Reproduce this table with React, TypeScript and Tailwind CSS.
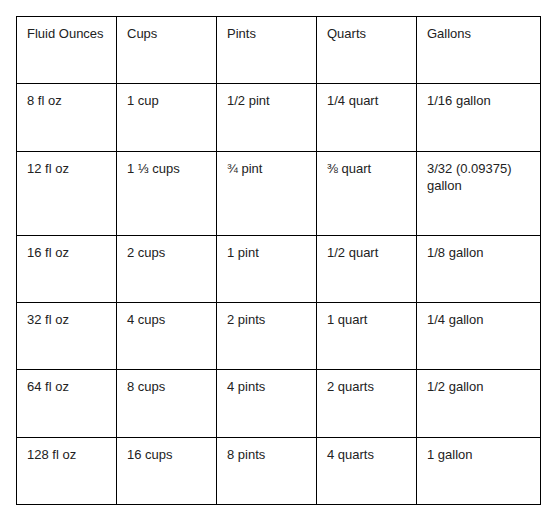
const rows: { cells: string[]; h: string }[] = [
  { cells: ['Fluid Ounces', 'Cups', 'Pints', 'Quarts', 'Gallons'], h: 'h-[67px]' },
  { cells: ['8 fl oz', '1 cup', '1/2 pint', '1/4 quart', '1/16 gallon'], h: 'h-[68px]' },
  { cells: ['12 fl oz', '1 ⅓ cups', '¾ pint', '⅜ quart', '3/32 (0.09375) gallon'], h: 'h-[84px]' },
  { cells: ['16 fl oz', '2 cups', '1 pint', '1/2 quart', '1/8 gallon'], h: 'h-[67px]' },
  { cells: ['32 fl oz', '4 cups', '2 pints', '1 quart', '1/4 gallon'], h: 'h-[67px]' },
  { cells: ['64 fl oz', '8 cups', '4 pints', '2 quarts', '1/2 gallon'], h: 'h-[68px]' },
  { cells: ['128 fl oz', '16 cups', '8 pints', '4 quarts', '1 gallon'], h: 'h-[67px]' },
];

export default function App() {
  return (
    <div className="w-[556px] h-[517px] bg-white pt-[16px] pl-[16px] font-['Liberation_Sans',Arial,sans-serif] text-[13px] leading-[17px] text-[#222]">
      <table className="border-collapse table-fixed w-[524px]">
        <colgroup>
          <col className="w-[100px]" />
          <col className="w-[100px]" />
          <col className="w-[100px]" />
          <col className="w-[100px]" />
          <col className="w-[124px]" />
        </colgroup>
        <tbody>
          {rows.map((row, i) => (
            <tr key={i} className={row.h}>
              {row.cells.map((cell, j) => (
                <td key={j} className="border border-black align-top pt-[8px] pl-[10px] pr-[8px]">
                  {cell}
                </td>
              ))}
            </tr>
          ))}
        </tbody>
      </table>
    </div>
  );
}
